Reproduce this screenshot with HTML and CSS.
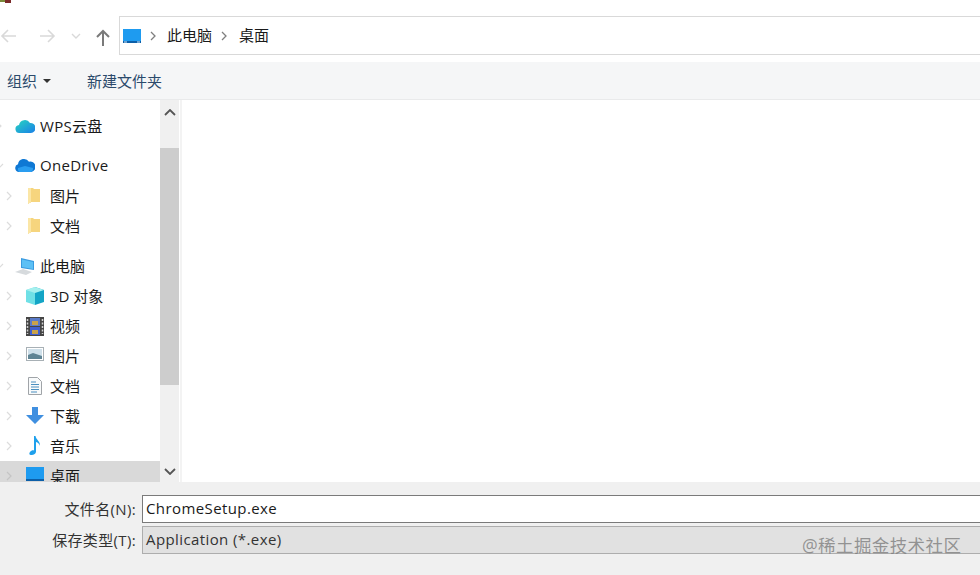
FILE: index.html
```html
<!DOCTYPE html>
<html lang="zh-CN">
<head>
<meta charset="utf-8">
<title>另存为</title>
<link rel="stylesheet" href="styles.css">
</head>
<body>
<div class="dialog">
  <svg class="corner" width="14" height="3" viewBox="0 0 14 3"><rect x="0" y="0" width="5" height="2" fill="#7a8a3a"/><rect x="5" y="0" width="6" height="3" fill="#7a2a2a"/></svg>

  <div class="navbar">
    <div class="navbtns">
      <svg class="nav nav-back" width="18" height="14" viewBox="0 0 18 14"><path d="M16 7H2M8 1L2 7l6 6" fill="none" stroke="#d9d9d9" stroke-width="1.6"/></svg>
      <svg class="nav nav-fwd" width="18" height="14" viewBox="0 0 18 14"><path d="M2 7h14M10 1l6 6-6 6" fill="none" stroke="#d9d9d9" stroke-width="1.6"/></svg>
      <svg class="nav nav-down" width="10" height="6" viewBox="0 0 10 6"><path d="M1 1l4 4 4-4" fill="none" stroke="#d9d9d9" stroke-width="1.4"/></svg>
      <svg class="nav nav-up" width="14" height="17" viewBox="0 0 14 17"><path d="M7 17V2M1 8l6-6 6 6" fill="none" stroke="#7a7a7a" stroke-width="2"/></svg>
    </div>
    <div class="address">
      <svg class="crumb-icon" width="18" height="14" viewBox="0 0 18 14"><rect width="18" height="14" fill="#1e9bf0"/><rect y="12" width="18" height="2" fill="#0c5fa8"/><rect x="1" y="12.5" width="3" height="1" fill="#cfe8fb"/><rect x="14" y="12.5" width="3" height="1" fill="#cfe8fb"/></svg>
      <svg class="crumb-sep" width="6" height="10" viewBox="0 0 6 10"><path d="M1 1l4 4-4 4" fill="none" stroke="#7f7f7f" stroke-width="1.3"/></svg>
      <span class="crumb">此电脑</span>
      <svg class="crumb-sep" width="6" height="10" viewBox="0 0 6 10"><path d="M1 1l4 4-4 4" fill="none" stroke="#7f7f7f" stroke-width="1.3"/></svg>
      <span class="crumb">桌面</span>
    </div>
  </div>

  <div class="toolbar">
    <span class="tool tool-org">组织<i class="caret"></i></span>
    <span class="tool">新建文件夹</span>
  </div>

  <div class="main">
    <div class="tree">
      <div class="row row-root row-first">
        <svg class="exp" width="6" height="10" viewBox="0 0 6 10"><path d="M1 1l4 4-4 4" fill="none" stroke="#dcdcdc" stroke-width="1.2"/></svg>
        <svg class="ic" width="20" height="16" viewBox="0 0 20 16"><defs><linearGradient id="w" x1="0" y1="0" x2="1" y2="1"><stop offset="0" stop-color="#27d5c0"/><stop offset="1" stop-color="#1a7fe8"/></linearGradient></defs><path d="M5 15a4 4 0 0 1-1-8 6 6 0 0 1 11-2 5 5 0 0 1 1 10z" fill="url(#w)"/></svg>
        <span class="latin">WPS云盘</span>
      </div>
      <div class="row row-root row-gap">
        <svg class="exp" width="10" height="6" viewBox="0 0 10 6"><path d="M1 1l4 4 4-4" fill="none" stroke="#dcdcdc" stroke-width="1.2"/></svg>
        <svg class="ic" width="20" height="14" viewBox="0 0 20 14"><path d="M4 14a4 4 0 0 1-1-7.800 6 6 0 0 1 11-2.500 5 5 0 0 1 2.500 10.300z" fill="#0f78d4"/><path d="M4 14a4 4 0 0 1-1-4l7-2 8 2a4 4 0 0 1-1.500 4z" fill="#2a9df0"/></svg>
        <span class="latin">OneDrive</span>
      </div>
      <div class="row row-child">
        <svg class="exp" width="6" height="10" viewBox="0 0 6 10"><path d="M1 1l4 4-4 4" fill="none" stroke="#dcdcdc" stroke-width="1.2"/></svg>
        <svg class="ic" width="12" height="17" viewBox="0 0 12 17"><path d="M0 1h5l1 1h6v13H3l-3 2z" fill="#f6d57e"/><rect x="0" y="1" width="3" height="15" fill="#fbe6a6"/></svg>
        <span>图片</span>
      </div>
      <div class="row row-child">
        <svg class="exp" width="6" height="10" viewBox="0 0 6 10"><path d="M1 1l4 4-4 4" fill="none" stroke="#dcdcdc" stroke-width="1.2"/></svg>
        <svg class="ic" width="12" height="17" viewBox="0 0 12 17"><path d="M0 1h5l1 1h6v13H3l-3 2z" fill="#f6d57e"/><rect x="0" y="1" width="3" height="15" fill="#fbe6a6"/></svg>
        <span>文档</span>
      </div>
      <div class="row row-root row-gap">
        <svg class="exp" width="10" height="6" viewBox="0 0 10 6"><path d="M1 1l4 4 4-4" fill="none" stroke="#dcdcdc" stroke-width="1.2"/></svg>
        <svg class="ic" width="20" height="18" viewBox="0 0 20 18"><path d="M6 0l13 3v9L6 10z" fill="#3a9be0"/><path d="M7 1.500l11 2.500v7L7 9z" fill="#5cc0f5"/><path d="M0 14l8-3 9 3-6 3z" fill="#d6dadd"/></svg>
        <span>此电脑</span>
      </div>
      <div class="row row-child">
        <svg class="exp" width="6" height="10" viewBox="0 0 6 10"><path d="M1 1l4 4-4 4" fill="none" stroke="#dcdcdc" stroke-width="1.2"/></svg>
        <svg class="ic ic-wide" width="18" height="18" viewBox="0 0 18 18"><path d="M9 0l9 3v12l-9 3z" fill="#13a5c6"/><path d="M9 0L0 3v12l9 3z" fill="#6fe0e6"/><path d="M0 3l9 3 9-3-9-3z" fill="#a5f0ee"/></svg>
        <span>3D 对象</span>
      </div>
      <div class="row row-child">
        <svg class="exp" width="6" height="10" viewBox="0 0 6 10"><path d="M1 1l4 4-4 4" fill="none" stroke="#dcdcdc" stroke-width="1.2"/></svg>
        <svg class="ic ic-wide" width="18" height="19" viewBox="0 0 18 19"><rect width="18" height="19" fill="#454545"/><rect x="4" y="1" width="10" height="8" fill="#5a7ac8"/><rect x="4" y="10" width="10" height="8" fill="#3f5fd0"/><rect x="6" y="4" width="6" height="4" fill="#c9a24a"/><rect x="6" y="13" width="6" height="4" fill="#c9a24a"/><path d="M1.500 2v15M16.500 2v15" stroke="#d0d0d0" stroke-width="1.500" stroke-dasharray="2 1.500"/></svg>
        <span>视频</span>
      </div>
      <div class="row row-child">
        <svg class="exp" width="6" height="10" viewBox="0 0 6 10"><path d="M1 1l4 4-4 4" fill="none" stroke="#dcdcdc" stroke-width="1.2"/></svg>
        <svg class="ic ic-wide" width="18" height="14" viewBox="0 0 18 14"><rect x=".5" y=".5" width="17" height="13" fill="#fff" stroke="#a8b0b5"/><rect x="2" y="2" width="14" height="10" fill="#cfe0ea"/><path d="M2 8l5-2 9 3v3H2z" fill="#5f8494"/></svg>
        <span>图片</span>
      </div>
      <div class="row row-child">
        <svg class="exp" width="6" height="10" viewBox="0 0 6 10"><path d="M1 1l4 4-4 4" fill="none" stroke="#dcdcdc" stroke-width="1.2"/></svg>
        <svg class="ic ic-doc" width="14" height="18" viewBox="0 0 14 18"><path d="M.5.500h9l4 4v13H.5z" fill="#f8fafb" stroke="#a0a4a8"/><path d="M3 5h5M3 7.500h8M3 10h8M3 12.500h8M3 15h6" stroke="#4a8fc0"/></svg>
        <span>文档</span>
      </div>
      <div class="row row-child">
        <svg class="exp" width="6" height="10" viewBox="0 0 6 10"><path d="M1 1l4 4-4 4" fill="none" stroke="#dcdcdc" stroke-width="1.2"/></svg>
        <svg class="ic ic-wide" width="18" height="17" viewBox="0 0 18 17"><path d="M6 0h6v8h6l-9 9-9-9h6z" fill="#3f8fe0"/></svg>
        <span>下载</span>
      </div>
      <div class="row row-child">
        <svg class="exp" width="6" height="10" viewBox="0 0 6 10"><path d="M1 1l4 4-4 4" fill="none" stroke="#dcdcdc" stroke-width="1.2"/></svg>
        <svg class="ic ic-note" width="12" height="19" viewBox="0 0 12 19"><path d="M5 0h1.500c.5 4 5 5 4.500 10-.5-2-2-3.500-4-4v9.500c0 2-2 3.500-4.500 3.500S0 17.500 1 16s3-2 4-1.500z" fill="#1ea0ec"/></svg>
        <span>音乐</span>
      </div>
      <div class="row row-child row-selected">
        <svg class="exp" width="6" height="10" viewBox="0 0 6 10"><path d="M1 1l4 4-4 4" fill="none" stroke="#c4c4c4" stroke-width="1.2"/></svg>
        <svg class="ic ic-wide" width="18" height="14" viewBox="0 0 18 14"><rect width="18" height="14" fill="#1e9bf0"/><rect y="12" width="18" height="2" fill="#0c5fa8"/></svg>
        <span>桌面</span>
      </div>
    </div>
    <div class="scrollbar">
      <div class="arrow arrow-up"><svg width="12" height="7" viewBox="0 0 12 7"><path d="M1 6l5-5 5 5" fill="none" stroke="#555" stroke-width="1.800"/></svg></div>
      <div class="thumb"></div>
      <div class="track"></div>
      <div class="arrow arrow-down"><svg width="12" height="7" viewBox="0 0 12 7"><path d="M1 1l5 5 5-5" fill="none" stroke="#555" stroke-width="1.800"/></svg></div>
    </div>
    <div class="content"></div>
  </div>

  <div class="footer">
    <div class="field">
      <label class="field-label">文件名(N):</label>
      <div class="field-box field-input">ChromeSetup.exe</div>
    </div>
    <div class="field">
      <label class="field-label">保存类型(T):</label>
      <div class="field-box field-select">Application (*.exe)</div>
    </div>
  </div>
  <div class="watermark">@稀土掘金技术社区</div>
</div>
</body>
</html>
```
FILE: styles.css
```css
* { box-sizing: border-box; }
html, body { margin: 0; padding: 0; }
body { width: 980px; height: 575px; overflow: hidden; background: #fff; font-family: "Open Sans", "Noto Sans CJK SC", sans-serif; font-size: 15px; color: #1a1a1a; }
.dialog { position: relative; width: 980px; height: 575px; display: flex; flex-direction: column; overflow: hidden; }
.corner { position: absolute; left: 0; top: 0; }

.navbar { height: 62px; display: flex; align-items: flex-start; padding-top: 16px; flex: none; }
.navbtns { width: 119px; height: 38px; display: flex; align-items: center; flex: none; }
.nav { flex: none; }
.nav-back { margin-top: 2px; }
.nav-fwd { margin-left: 20px; margin-top: 2px; }
.nav-down { margin-left: 15px; margin-top: 2px; }
.nav-up { margin-left: 15px; margin-top: 4px; }
.address { flex: 1; height: 39px; margin-right: -4px; border: 1px solid #d9d9d9; display: flex; align-items: center; padding-left: 3px; }
.crumb-icon { flex: none; }
.crumb-sep { flex: none; margin: 0 12px 0 9px; }
.crumb-icon + .crumb-sep { margin-right: 11px; }
.crumb { line-height: 20px; padding-bottom: 2px; }

.toolbar { height: 38px; flex: none; background: #f5f6f7; border-bottom: 1px solid #e9eaeb; display: flex; align-items: center; padding-left: 7px; color: #2b4a6b; gap: 36px; }
.tool { line-height: 20px; display: inline-flex; align-items: center; }
.caret { display: inline-block; margin-left: 6px; border-left: 4px solid transparent; border-right: 4px solid transparent; border-top: 4px solid #333; }

.main { height: 382px; flex: none; display: flex; }
.tree { width: 160px; flex: none; overflow: hidden; padding-top: 11px; }
.row { height: 30px; display: flex; align-items: center; position: relative; white-space: nowrap; padding-bottom: 2px; }
.row-gap { margin-top: 10px; }
.row-root { padding-left: 40px; }
.row-child { padding-left: 50px; }
.row-selected { background: #d9d9d9; }
.latin { letter-spacing: .3px; }
.exp { position: absolute; left: 6px; top: 10px; }
.row-root .exp { left: -4px; }
.row-root .exp[width="10"] { top: 12px; left: -6px; }
.ic { position: absolute; }
.row-root .ic { left: 15px; top: 7px; }
.row-child .ic { left: 28px; top: 6px; }
.row-child .ic-wide { left: 26px; }
.row-child .ic-doc { left: 28px; }
.row-child .ic-note { left: 29px; top: 5px; }

.scrollbar { width: 19px; flex: none; background: #f0f0f0; display: flex; flex-direction: column; margin-right: 1px; }
.arrow { flex: none; display: flex; align-items: center; justify-content: center; }
.arrow-up { height: 24px; }
.arrow-down { height: 20px; padding-bottom: 2px; }
.thumb { height: 237px; background: #cdcdcd; flex: none; margin-top: 24px; }
.track { flex: 1; }
.content { flex: 1; background: #fff; border-left: 2px solid #f3f3f3; }

.footer { flex: 1; background: #f0f0f0; padding-top: 13px; display: flex; flex-direction: column; gap: 3px; }
.field { display: flex; align-items: center; height: 28px; }
.field-label { width: 137px; text-align: right; flex: none; color: #333; padding-right: 1px; line-height: 26px; padding-bottom: 1px; letter-spacing: .35px; }
.field-box { margin-left: 5px; width: 845px; height: 28px; flex: none; padding-left: 3px; line-height: 25px; letter-spacing: .4px; }
.field-input { background: #fff; border: 1px solid #7a7a7a; color: #1a1a1a; }
.field-select { background: #e1e1e1; border: 1px solid #adadad; color: #333; }
.watermark { position: absolute; left: 802px; top: 533px; font-size: 17.500px; letter-spacing: .4px; color: rgba(120,120,120,.75); white-space: nowrap; line-height: 24px; }
```
